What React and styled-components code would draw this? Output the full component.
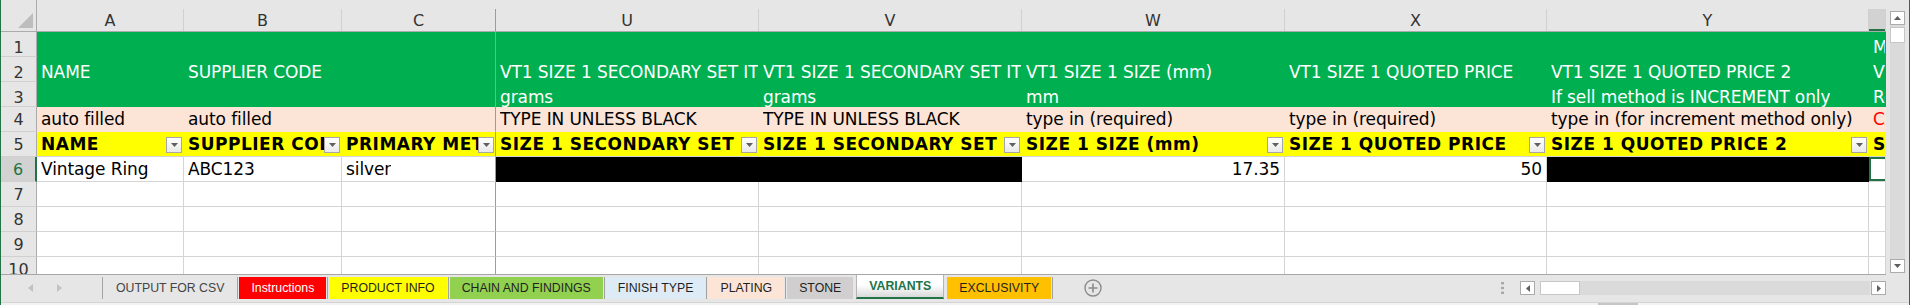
import React from 'react';
import styled, { createGlobalStyle } from 'styled-components';

const XL_GREEN = '#217346';
const COLS = '36px 147px 158px 154px 263px 263px 263px 262px 322px 17px';

const LETTERS = ['A', 'B', 'C', 'U', 'V', 'W', 'X', 'Y', ''];

const ROWS = [
  { n: 1, kind: 'green', cells: ['', '', '', '', '', '', '', '', 'MAX'] },
  {
    n: 2,
    kind: 'green',
    cells: [
      'NAME',
      'SUPPLIER CODE',
      '',
      'VT1 SIZE 1 SECONDARY SET ITEM WEIGHT',
      'VT1 SIZE 1 SECONDARY SET ITEM WEIGHT',
      'VT1 SIZE 1 SIZE (mm)',
      'VT1 SIZE 1 QUOTED PRICE',
      'VT1 SIZE 1 QUOTED PRICE 2',
      'VT1 SIZE 2',
    ],
  },
  {
    n: 3,
    kind: 'green',
    cells: ['', '', '', 'grams', 'grams', 'mm', '', 'If sell method is INCREMENT only', 'Required'],
  },
  {
    n: 4,
    kind: 'peach',
    cells: [
      'auto filled',
      'auto filled',
      '',
      'TYPE IN UNLESS BLACK',
      'TYPE IN UNLESS BLACK',
      'type in (required)',
      'type in (required)',
      'type in (for increment method only)',
      { v: 'CALCULATED', red: true },
    ],
  },
  {
    n: 5,
    kind: 'head',
    cells: [
      'NAME',
      'SUPPLIER CODE',
      'PRIMARY METAL',
      'SIZE 1 SECONDARY SET ITEM WEIGHT',
      'SIZE 1 SECONDARY SET ITEM WEIGHT',
      'SIZE 1 SIZE (mm)',
      'SIZE 1 QUOTED PRICE',
      'SIZE 1 QUOTED PRICE 2',
      { v: 'SIZE 2', noDrop: true },
    ],
  },
  {
    n: 6,
    kind: 'data',
    cells: [
      'Vintage Ring',
      'ABC123',
      'silver',
      { black: true },
      { black: true },
      { v: '17.35', right: true },
      { v: '50', right: true },
      { black: true },
      { active: true },
    ],
  },
  { n: 7, kind: 'data', cells: Array(9).fill('') },
  { n: 8, kind: 'data', cells: Array(9).fill('') },
  { n: 9, kind: 'data', cells: Array(9).fill('') },
  { n: 10, kind: 'data', cells: Array(9).fill('') },
];

const KINDS = {
  green: { fill: '#00b050', color: '#ffffff', tight: true },
  peach: { fill: '#fce4d6', color: '#000000' },
  head: { fill: '#ffff00', color: '#000000', bold: true, hline: true },
  data: { fill: '#ffffff', color: '#000000', grid: true },
};

const TABS = [
  { label: 'OUTPUT FOR CSV', color: '#444444' },
  { label: 'Instructions', bg: '#ff0000', color: '#ffffff' },
  { label: 'PRODUCT INFO', bg: '#ffff00' },
  { label: 'CHAIN AND FINDINGS', bg: '#92d050' },
  { label: 'FINISH TYPE', bg: '#ddebf7' },
  { label: 'PLATING', bg: '#fce4d6' },
  { label: 'STONE', bg: '#d0cece', hideSep: true },
  { label: 'VARIANTS', active: true, hideSep: true },
  { label: 'EXCLUSIVITY', bg: '#ffc000' },
];

const App = () => {
  return (
    <>
      <GlobalStyle />
      <Window>
        <Main>
          <Sheet>
            <HeadRow>
              <Corner>
                <svg width="15" height="15" viewBox="0 0 15 15">
                  <polygon points="15,0 15,15 0,15" fill="#bdbdbd" />
                </svg>
              </Corner>
              {LETTERS.map((l, i) => (
                <ColHead key={i}>
                  <ColLabel $frozen={i === 2} $active={i === 8}>
                    {l}
                  </ColLabel>
                </ColHead>
              ))}
            </HeadRow>

            {ROWS.map((row) => {
              const k = KINDS[row.kind];
              return (
                <Row key={row.n}>
                  <RowHead $active={row.n === 6} $tight={k.tight}>
                    {row.n}
                  </RowHead>
                  {row.cells.map((c, i) => {
                    const cell = typeof c === 'string' ? { v: c } : c;
                    const filled = row.kind !== 'data' || cell.black;
                    return (
                      <Cell
                        key={i}
                        $fill={cell.black ? '#000000' : k.fill}
                        $color={cell.red ? '#ff0000' : k.color}
                        $bold={k.bold}
                        $tight={k.tight}
                        $right={cell.right}
                        $vline={!filled}
                        $hline={!filled || k.hline}
                        $frozen={i === 2}
                        $active={cell.active}
                      >
                        <CellText>{cell.v}</CellText>
                        {row.kind === 'head' && !cell.noDrop && (
                          <Drop>
                            <svg width="7" height="4" viewBox="0 0 7 4">
                              <polygon points="0,0 7,0 3.5,4" fill="#5f5f5f" />
                            </svg>
                          </Drop>
                        )}
                      </Cell>
                    );
                  })}
                </Row>
              );
            })}
          </Sheet>

          <VScroll>
            <VTrack>
              <ScrollBtn>
                <svg width="7" height="4" viewBox="0 0 7 4">
                  <polygon points="0,4 7,4 3.5,0" fill="#5f5f5f" />
                </svg>
              </ScrollBtn>
              <VThumb />
              <Filler />
              <ScrollBtn>
                <svg width="7" height="4" viewBox="0 0 7 4">
                  <polygon points="0,0 7,0 3.5,4" fill="#5f5f5f" />
                </svg>
              </ScrollBtn>
            </VTrack>
          </VScroll>
        </Main>

        <TabBar>
          <Nav>
            <svg width="5" height="8" viewBox="0 0 5 8">
              <polygon points="5,0 5,8 0,4" fill="#c2c2c2" />
            </svg>
            <svg width="5" height="8" viewBox="0 0 5 8">
              <polygon points="0,0 0,8 5,4" fill="#c2c2c2" />
            </svg>
          </Nav>
          <TabSep />
          {TABS.map((t) => (
            <React.Fragment key={t.label}>
              <Tab $bg={t.bg} $color={t.color} $active={t.active}>
                {t.label}
              </Tab>
              <TabSep $hidden={t.hideSep} />
            </React.Fragment>
          ))}
          <AddSheet>
            <svg width="18" height="18" viewBox="0 0 18 18">
              <circle cx="9" cy="9" r="8" fill="none" stroke="#8c8c8c" strokeWidth="1.4" />
              <path d="M9 4.5v9M4.5 9h9" stroke="#8c8c8c" strokeWidth="1.6" />
            </svg>
          </AddSheet>

          <HScroll>
            <Grip>
              <svg width="3" height="12" viewBox="0 0 3 12">
                <rect x="0" y="0" width="3" height="2.4" fill="#a8a8a8" />
                <rect x="0" y="4.8" width="3" height="2.4" fill="#a8a8a8" />
                <rect x="0" y="9.6" width="3" height="2.4" fill="#a8a8a8" />
              </svg>
            </Grip>
            <ScrollBtn>
              <svg width="4" height="7" viewBox="0 0 4 7">
                <polygon points="4,0 4,7 0,3.5" fill="#5f5f5f" />
              </svg>
            </ScrollBtn>
            <HTrack>
              <HThumb />
            </HTrack>
            <ScrollBtn>
              <svg width="4" height="7" viewBox="0 0 4 7">
                <polygon points="0,0 0,7 4,3.5" fill="#5f5f5f" />
              </svg>
            </ScrollBtn>
          </HScroll>
        </TabBar>

        <Strip>
          <StripMark />
        </Strip>
      </Window>
    </>
  );
};

const GlobalStyle = createGlobalStyle`
  html, body {
    margin: 0;
    padding: 0;
    background: #ffffff;
  }
  * {
    box-sizing: border-box;
  }
`;

const Window = styled.div`
  display: flex;
  flex-direction: column;
  width: 1910px;
  height: 305px;
  overflow: hidden;
  background: #e6e6e6;
  border-left: 1px solid ${XL_GREEN};
  border-right: 1px solid ${XL_GREEN};
  font-family: 'DejaVu Sans', 'Liberation Sans', sans-serif;
`;

const Main = styled.div`
  display: flex;
  flex: none;
  height: 275px;
`;

const Sheet = styled.div`
  width: 1885px;
  height: 275px;
  overflow: hidden;
  background: #ffffff;
  border-bottom: 1px solid #a6a6a6;
`;

const Row = styled.div`
  display: grid;
  grid-template-columns: ${COLS};
  height: 25px;
`;

const HeadRow = styled(Row)`
  height: 32px;
  background: #e6e6e6;
  border-bottom: 1px solid #ababab;
`;

const ColHead = styled.div`
  display: flex;
  align-items: flex-end;
  min-width: 0;
`;

const ColLabel = styled.div`
  flex: 1;
  display: flex;
  align-items: center;
  justify-content: center;
  height: 22px;
  padding-top: 1px;
  font-size: 16px;
  color: #333333;
  background: ${(p) => (p.$active ? '#d2d2d2' : 'transparent')};
  border-right: 1px solid ${(p) => (p.$frozen ? '#9c9c9c' : '#d0d0d0')};
  box-shadow: ${(p) => (p.$active ? `inset 0 -2px ${XL_GREEN}` : 'none')};
`;

const Corner = styled.div`
  display: flex;
  align-items: flex-end;
  justify-content: flex-end;
  padding: 0 3px 3px 0;
  border-right: 1px solid #ababab;
`;

const RowHead = styled.div`
  display: flex;
  align-items: flex-end;
  justify-content: center;
  padding-bottom: ${(p) => (p.$tight ? '0' : '1px')};
  font-size: 16px;
  line-height: ${(p) => (p.$tight ? '17px' : '21px')};
  color: ${(p) => (p.$active ? XL_GREEN : '#333333')};
  background: ${(p) => (p.$active ? '#d2d2d2' : '#e6e6e6')};
  border-right: ${(p) => (p.$active ? `2px solid ${XL_GREEN}` : '1px solid #ababab')};
  border-bottom: 1px solid #d0d0d0;
`;

const Cell = styled.div`
  display: flex;
  align-items: flex-end;
  justify-content: ${(p) => (p.$right ? 'flex-end' : 'flex-start')};
  min-width: 0;
  overflow: hidden;
  padding: 0 ${(p) => (p.$right ? '4px' : '0')} ${(p) => (p.$tight ? '0' : '1px')} 4px;
  font-size: 17px;
  line-height: ${(p) => (p.$tight ? '19px' : '21px')};
  font-weight: ${(p) => (p.$bold ? 700 : 400)};
  letter-spacing: ${(p) => (p.$bold ? '0.5px' : '-0.1px')};
  white-space: nowrap;
  color: ${(p) => p.$color};
  background: ${(p) => p.$fill};
  border-right: 1px solid
    ${(p) => (p.$frozen ? '#9c9c9c' : p.$vline ? '#d4d4d4' : 'transparent')};
  border-bottom: ${(p) =>
    p.$tight ? 'none' : `1px solid ${p.$hline ? '#d4d4d4' : 'transparent'}`};
  box-shadow: ${(p) =>
    p.$active
      ? `inset 2px 0 ${XL_GREEN}, inset 0 2px ${XL_GREEN}, inset 0 -2px ${XL_GREEN}`
      : 'none'};
`;

const CellText = styled.span`
  flex: 0 1 auto;
  min-width: 0;
  overflow: hidden;
  text-overflow: clip;
`;

const Drop = styled.div`
  flex: none;
  display: flex;
  align-items: center;
  justify-content: center;
  width: 16px;
  height: 16px;
  margin: 0 1px 2px auto;
  border: 1px solid #a6a6a6;
  background: linear-gradient(#ffffff, #e9e9e9);
`;

const VScroll = styled.div`
  display: flex;
  justify-content: center;
  width: 23px;
  height: 275px;
  padding: 11px 0 2px;
`;

const VTrack = styled.div`
  display: flex;
  flex-direction: column;
  width: 15px;
  background: #dadada;
`;

const ScrollBtn = styled.div`
  flex: none;
  display: flex;
  align-items: center;
  justify-content: center;
  width: 15px;
  height: 14px;
  background: #ffffff;
  border: 1px solid #ababab;
`;

const VThumb = styled.div`
  height: 16px;
  margin-top: 2px;
  background: #ffffff;
  border: 1px solid #c6c6c6;
`;

const Filler = styled.div`
  flex: 1;
`;

const TabBar = styled.div`
  display: flex;
  align-items: flex-start;
  flex: none;
  height: 27px;
  padding-top: 2px;
  font-family: 'Liberation Sans', Arial, sans-serif;
  font-size: 12.3px;
`;

const Nav = styled.div`
  display: flex;
  align-items: center;
  gap: 24px;
  width: 100px;
  height: 22px;
  padding-left: 27px;
`;

const TabSep = styled.div`
  flex: none;
  width: 1px;
  height: 22px;
  margin: 0 1px;
  background: ${(p) => (p.$hidden ? 'transparent' : '#a3a3a3')};
`;

const Tab = styled.div`
  flex: none;
  display: flex;
  align-items: center;
  height: ${(p) => (p.$active ? '24px' : '22px')};
  margin-top: ${(p) => (p.$active ? '-2px' : '0')};
  padding: 0 12px;
  white-space: nowrap;
  color: ${(p) => (p.$active ? XL_GREEN : p.$color || '#1f1f1f')};
  font-weight: ${(p) => (p.$active ? 700 : 400)};
  background: ${(p) =>
    p.$active ? 'linear-gradient(#ffffff 45%, #d9d9d9)' : p.$bg || 'transparent'};
  border-left: ${(p) => (p.$active ? '1px solid #b4b4b4' : 'none')};
  border-right: ${(p) => (p.$active ? '1px solid #b4b4b4' : 'none')};
  border-bottom: ${(p) => (p.$active ? `2px solid ${XL_GREEN}` : 'none')};
`;

const AddSheet = styled.div`
  display: flex;
  align-items: center;
  height: 22px;
  margin-left: 30px;
`;

const HScroll = styled.div`
  display: flex;
  align-items: center;
  width: 385px;
  height: 14px;
  margin: 4px 23px 0 auto;
`;

const Grip = styled.div`
  display: flex;
  width: 4px;
  margin-right: 15px;
`;

const HTrack = styled.div`
  flex: 1;
  height: 14px;
  margin: 0 1px 0 5px;
  background: #dadada;
`;

const HThumb = styled.div`
  width: 40px;
  height: 14px;
  background: #ffffff;
  border: 1px solid #c6c6c6;
`;

const Strip = styled.div`
  flex: none;
  height: 3px;
  background: #f2f2f2;
  border-top: 1px solid #d4d4d4;
`;

const StripMark = styled.div`
  width: 40px;
  height: 2px;
  margin-left: 1597px;
  background: #c6c6c6;
`;

export default App;
